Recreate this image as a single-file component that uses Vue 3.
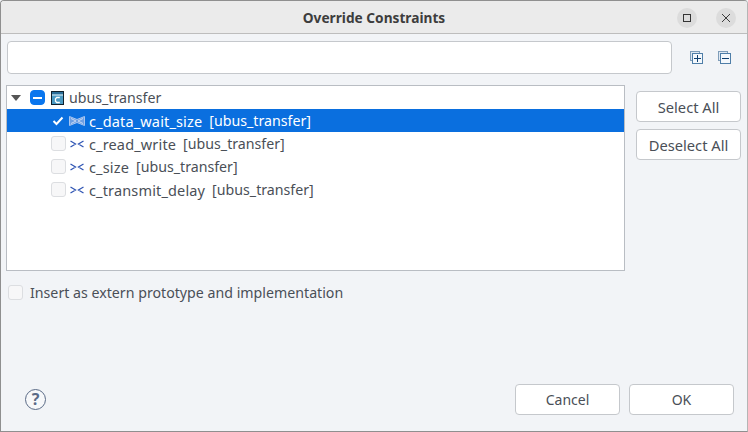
<script setup>
const rows = [
  { name: 'c_data_wait_size', selected: true },
  { name: 'c_read_write' },
  { name: 'c_size' },
  { name: 'c_transmit_delay' },
]
</script>

<template>
  <div class="dialog">
    <header class="titlebar">
      <span class="title">Override Constraints</span>
      <div class="win-btns">
        <button class="win-btn">
          <svg width="12" height="12" viewBox="0 0 12 12"><rect x="2.500" y="2.500" width="7" height="7" fill="none" stroke="#333" stroke-width="1"/></svg>
        </button>
        <button class="win-btn">
          <svg width="12" height="12" viewBox="0 0 12 12"><path d="M2 2l8 8M10 2l-8 8" stroke="#3d3d3d" stroke-width="1"/></svg>
        </button>
      </div>
    </header>

    <div class="body">
      <div class="filter-row">
        <input class="filter" type="text" />
        <svg class="tool" width="13" height="13" viewBox="0 0 13 13">
          <rect x="0.500" y="0.500" width="9" height="9" fill="#dfe8f2" stroke="#7f9db9"/>
          <rect x="2.500" y="2.500" width="10" height="10" fill="#f4f8fc" stroke="#4f7ea8"/>
          <path d="M4 7.500h7M7.500 4v7" stroke="#0f3f70"/>
        </svg>
        <svg class="tool" width="13" height="13" viewBox="0 0 13 13">
          <rect x="0.500" y="0.500" width="9" height="9" fill="#dfe8f2" stroke="#7f9db9"/>
          <rect x="2.500" y="2.500" width="10" height="10" fill="#f4f8fc" stroke="#4f7ea8"/>
          <path d="M4 7.500h7" stroke="#0f3f70"/>
        </svg>
      </div>

      <div class="main-row">
        <div class="tree">
          <div class="row row--root">
            <span class="arrow"></span>
            <span class="check check--mixed"><span class="dash"></span></span>
            <svg class="class-icon" width="13" height="14" viewBox="0 0 13 14">
              <rect x="0.500" y="0.500" width="12" height="13" fill="#4a9ac4" stroke="#10202c"/>
              <rect x="1" y="1" width="11" height="2.500" fill="#2a6f9a"/>
              <rect x="1" y="3.500" width="11" height="1" fill="#e8f2f8"/>
              <path d="M8.800 6.500H5.800L4.500 7.800v2.400L5.800 11.500h3" fill="none" stroke="#fff" stroke-width="1.300"/>
            </svg>
            <span class="root-label">ubus_transfer</span>
          </div>
          <div
            v-for="r in rows"
            :key="r.name"
            class="row row--child"
            :class="{ 'row--selected': r.selected }"
          >
            <svg v-if="r.selected" class="tick" width="15" height="12" viewBox="0 0 15 12">
              <path d="M2.500 6l3 3 6-6.500" fill="none" stroke="#fff" stroke-width="2"/>
            </svg>
            <span v-else class="check"></span>
            <svg v-if="r.selected" class="bowtie" width="16" height="10" viewBox="0 0 16 10">
              <path d="M0.500 0.500L8 3.500 15.500 0.500v9L8 6.500 0.500 9.500z" fill="#6f9fe2" stroke="#a9c6f0"/>
              <path d="M2 2.500L7 5 2 7.500M14 2.500L9 5l5 2.500" fill="none" stroke="#c6d9f5"/>
            </svg>
            <svg v-else class="constraint" width="14" height="8" viewBox="0 0 14 8">
              <path d="M0.500 1l5 3-5 3M13.500 1l-5 3 5 3" fill="none" stroke="#3358b5" stroke-width="1.300"/>
            </svg>
            <span class="name">{{ r.name }}</span>
            <span class="owner">[ubus_transfer]</span>
          </div>
        </div>

        <div class="side">
          <button class="btn btn--side">Select All</button>
          <button class="btn btn--side">Deselect All</button>
        </div>
      </div>

      <label class="extern">
        <span class="check"></span>
        <span>Insert as extern prototype and implementation</span>
      </label>

      <footer class="footer">
        <span class="help">?</span>
        <div class="actions">
          <button class="btn">Cancel</button>
          <button class="btn">OK</button>
        </div>
      </footer>
    </div>
  </div>
</template>

<style scoped>
.dialog {
  box-sizing: border-box;
  width: 748px;
  height: 432px;
  display: flex;
  flex-direction: column;
  background: #f2f4f7;
  border: 1px solid #8f8f8f;
  border-right-color: #b5b5b5;
  border-radius: 4px 4px 0 0;
  font-family: "Noto Sans", "Open Sans", sans-serif;
  font-size: 14px;
  color: #4a4f57;
  overflow: hidden;
}
.titlebar {
  height: 32px;
  flex: none;
  display: flex;
  align-items: center;
  justify-content: center;
  position: relative;
  background: #ebebeb;
  border-bottom: 1px solid #bdbdbd;
}
.title {
  font-weight: 700;
  font-size: 13.7px;
  color: #3d3d3d;
}
.win-btns {
  position: absolute;
  right: 11px;
  top: 7px;
  display: flex;
  gap: 19px;
}
.win-btn {
  width: 20px;
  height: 20px;
  padding: 0;
  border: 0;
  border-radius: 50%;
  background: #dcdcdc;
  display: flex;
  align-items: center;
  justify-content: center;
}
.body {
  flex: 1;
  display: flex;
  flex-direction: column;
  padding: 7px 6px 16px 5px;
}
.filter-row {
  display: flex;
  align-items: center;
  height: 33px;
}
.filter {
  box-sizing: border-box;
  flex: none;
  width: 665px;
  height: 33px;
  margin-left: 1px;
  margin-right: 18px;
  border: 1px solid #c5c8cc;
  border-radius: 4px;
  background: #fff;
}
.tool {
  flex: none;
  margin-right: 15px;
}
.main-row {
  display: flex;
  margin-top: 11px;
}
.tree {
  box-sizing: border-box;
  width: 619px;
  height: 186px;
  border: 1px solid #b9bdc3;
  background: #fff;
}
.row {
  height: 23px;
  display: flex;
  align-items: center;
  white-space: nowrap;
}
.row--root {
  padding-left: 4px;
}
.row--child {
  padding-left: 44px;
}
.row--selected {
  background: #0a6fdf;
  color: #fff;
}
.arrow {
  width: 0;
  height: 0;
  border-left: 5px solid transparent;
  border-right: 5px solid transparent;
  border-top: 6px solid #555;
  margin-right: 10px;
}
.check {
  box-sizing: border-box;
  width: 15px;
  height: 15px;
  flex: none;
  border: 1px solid #dcdee1;
  border-radius: 3px;
  background: #f7f7f8;
  display: flex;
  align-items: center;
  justify-content: center;
}
.check--mixed {
  background: #0a76ee;
  border-color: #0a76ee;
  border-radius: 4px;
  margin-left: -1px;
}
.dash {
  width: 9px;
  height: 2px;
  background: #fff;
}
.class-icon {
  margin-left: 6px;
  margin-right: 5px;
}
.root-label {
  font-size: 14.2px;
}
.tick {
  margin-right: 3px;
}
.bowtie {
  margin-right: 4px;
}
.constraint {
  margin-left: 4px;
  margin-right: 5px;
}
.name {
  font-size: 14.5px;
  letter-spacing: 0.15px;
  margin-right: 7px;
}
.owner {
  font-size: 14.2px;
}
.side {
  display: flex;
  flex-direction: column;
  gap: 7px;
  margin-left: 11px;
  padding-top: 6px;
}
.btn {
  box-sizing: border-box;
  width: 105px;
  height: 31px;
  padding: 0;
  border: 1px solid #c5c8cc;
  border-radius: 4px;
  background: #fff;
  font: inherit;
  color: #4a4f57;
}
.btn--side {
  font-size: 14.7px;
}
.extern {
  display: flex;
  align-items: center;
  gap: 7px;
  margin-top: 12px;
  margin-left: 2px;
  font-size: 14.2px;
}
.footer {
  margin-top: auto;
  display: flex;
  align-items: center;
  justify-content: space-between;
  padding-right: 7px;
}
.help {
  box-sizing: border-box;
  width: 21px;
  height: 21px;
  margin-left: 19px;
  border: 1.5px solid #5a6a86;
  border-radius: 50%;
  background: #f7f8fa;
  color: #5a6a86;
  font-weight: 700;
  font-size: 16px;
  line-height: 18px;
  text-align: center;
}
.actions {
  display: flex;
  gap: 9px;
}
</style>

<style>
html, body { background: #f2f4f7; }
</style>
